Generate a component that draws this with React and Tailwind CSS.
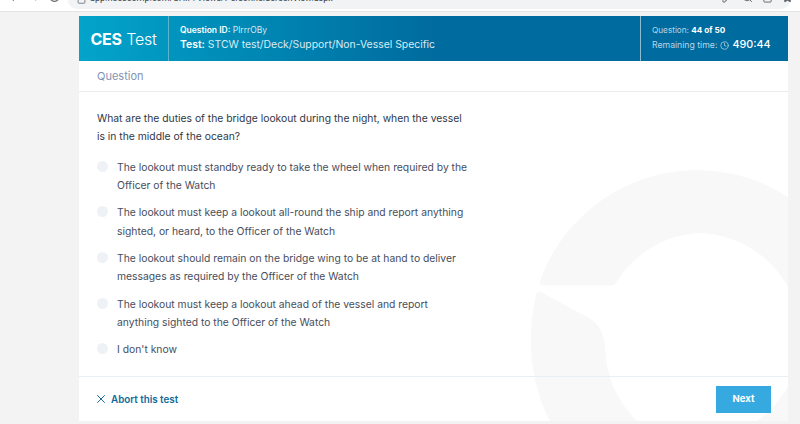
import React from "react";
import { ArrowLeft, ArrowRight, RotateCw, Lock, KeyRound, Search, Share, Star, Clock, X } from "lucide-react";

const options = [
  ["The lookout must standby ready to take the wheel when required by the", "Officer of the Watch"],
  ["The lookout must keep a lookout all-round the ship and report anything", "sighted, or heard, to the Officer of the Watch"],
  ["The lookout should remain on the bridge wing to be at hand to deliver", "messages as required by the Officer of the Watch"],
  ["The lookout must keep a lookout ahead of the vessel and report", "anything sighted to the Officer of the Watch"],
  ["I don't know"],
];

const BrowserBar = () => (
  <div className="h-[12px] bg-white border-b border-[#e4e4e4] overflow-hidden flex items-start text-[#5f6368]">
    <div className="w-[68px] shrink-0 flex items-start gap-[9px] pl-[7px] -mt-[10px]">
      <ArrowLeft size={13} />
      <ArrowRight size={13} className="text-[#b5b7ba]" />
      <RotateCw size={13} className="-ml-[3px]" />
    </div>
    <div className="flex-1 h-[9px] bg-[#f1f3f4] rounded-b-[12px] flex items-start relative">
      <Lock size={9} className="ml-[9px] -mt-[5px] shrink-0" />
      <span className="ml-[4px] -mt-[9px] text-[9px] leading-[14px] text-[#3c4043] whitespace-nowrap font-['Roboto',sans-serif]">
        app.ricescomp.com/SHIP/Views/PersonnelScreenView.aspx
      </span>
      <div className="absolute -right-[3px] -top-[8px] flex gap-[9px]">
        <KeyRound size={11} />
        <Search size={11} />
        <Share size={11} />
        <Star size={11} fill="currentColor" />
      </div>
    </div>
    <div className="w-[10px] shrink-0" />
  </div>
);

const Watermark = () => (
  <svg className="absolute inset-0 w-full h-full" viewBox="79 16 709 405" fill="#f8f8f8">
    <path d="M543 285.5 Q539 285.5 540 281 A167 167 0 0 1 788 197 L788 421 L757 421 A103.6 103.6 0 0 0 697 233 A103.6 103.6 0 0 0 616 283 Q614 285.5 611 285.5 Z" />
    <path d="M541 292 L589 318 Q604 327 605 348 Q607 392 637 421 L550 421 Q531 385 531 340 Q531 318 536 295 Q537 290 541 292 Z" />
  </svg>
);

const Option = ({ lines }) => (
  <div className="flex gap-[9px] last:-mt-[1px]">
    <span className="w-[11px] h-[11px] mt-[3px] rounded-full bg-[#eef1f6] shrink-0" />
    <p className="text-[#474e5e]">
      {lines.map((l) => (
        <span key={l} className="block whitespace-nowrap">{l}</span>
      ))}
    </p>
  </div>
);

export default function App() {
  return (
    <div className="w-[800px] h-[424px] bg-[#f3f3f3] overflow-hidden font-['Inter',sans-serif]">
      <BrowserBar />
      <div className="pl-[79px] pr-[12px] pt-[4px]">
        <div className="relative w-[709px] h-[405px] bg-white flex flex-col overflow-hidden">
          <Watermark />
          {/* cabecera */}
          <header className="relative flex h-[45px] text-white bg-gradient-to-r from-[#03a4ca] via-[#006b9e] via-50% to-[#006b9e]">
            <div className="w-[90px] shrink-0 border-r border-[#5cb3cf] flex items-center justify-center text-[16px] tracking-[-0.2px]">
              <b className="font-bold">CES</b>&nbsp;<span className="font-light">Test</span>
            </div>
            <div className="flex-1 pl-[11px] pt-[8px]">
              <p className="text-[8.5px] leading-[12px]">
                <b className="font-semibold">Question ID:</b> <span className="text-[#d5e8f1]">PlrrrOBy</span>
              </p>
              <p className="text-[10.4px] leading-[16px] mt-[1px] text-[#d9ecf5]">
                <b className="font-semibold text-white">Test:</b> STCW test/Deck/Support/Non-Vessel Specific
              </p>
            </div>
            <div className="w-[148px] shrink-0 border-l border-[#8dbcd3] pl-[11px] pt-[8px] text-[#b7d6e6]">
              <p className="text-[8.2px] leading-[12px]">
                Question: <b className="font-bold text-white">44 of 50</b>
              </p>
              <p className="text-[8.7px] leading-[16px] mt-[1px] flex items-center whitespace-nowrap">
                Remaining time:
                <Clock size={9} className="ml-[3px]" />
                <b className="ml-[3px] text-[10.8px] font-medium text-white">490:44</b>
              </p>
            </div>
          </header>
          <div className="relative h-[31px] shrink-0 border-b border-[#ebebeb] pl-[18px] flex items-center text-[11px] text-[#8393b3]">
            Question
          </div>
          {/* pregunta */}
          <div className="relative flex-1 pl-[18px] pt-[17px] text-[10.33px] leading-[18.3px]">
            <p className="text-[#303848]">
              What are the duties of the bridge lookout during the night, when the vessel
              <br />
              is in the middle of the ocean?
            </p>
            <div className="flex flex-col gap-[9.2px] mt-[12px]">
              {options.map((lines) => (
                <Option key={lines[0]} lines={lines} />
              ))}
            </div>
          </div>
          {/* pie */}
          <footer className="relative h-[45px] shrink-0 border-t border-[#e8f0f6] flex items-center justify-between pl-[18px] pr-[17px]">
            <button className="flex items-center gap-[3px] -ml-[3px] text-[9.8px] font-semibold text-[#0d6a9a]">
              <X size={14} strokeWidth={1.7} />
              <span className="translate-y-[1px]">Abort this test</span>
            </button>
            <button className="w-[55px] h-[27px] bg-[#36a9e1] text-white text-[9.5px] font-bold">Next</button>
          </footer>
        </div>
      </div>
    </div>
  );
}
